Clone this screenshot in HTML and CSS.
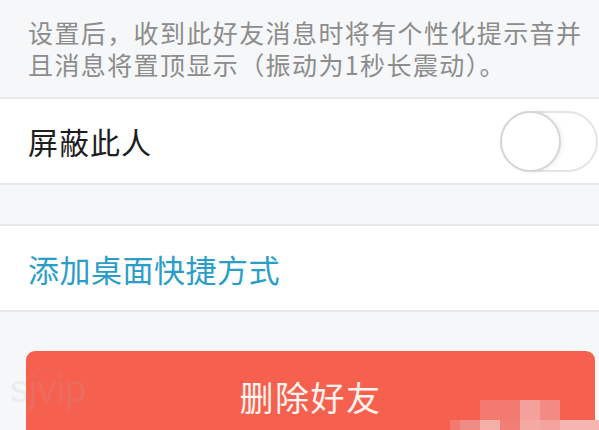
FILE: index.html
```html
<!DOCTYPE html>
<html lang="zh-CN">
<head>
    <meta charset="UTF-8">
    <title>好友设置</title>
    <link rel="stylesheet" href="styles.css">
</head>
<body>
    <div class="m_page">
        <div class="m_note">设置后，收到此好友消息时将有个性化提示音并且消息将置顶显示（振动为1秒长震动）。</div>

        <div class="m_row">
            <span class="m_label">屏蔽此人</span>
            <span class="m_switch"><span class="m_knob"></span></span>
        </div>

        <div class="m_gap"></div>

        <div class="m_row">
            <span class="m_link">添加桌面快捷方式</span>
        </div>

        <div class="m_btnwrap">
            <button class="m_delete">删除好友</button>
        </div>

        <div class="m_mark">sjvip</div>
        <div class="m_mosaic">
            <i class="b1"></i><i class="b2"></i><i class="b3"></i><i class="b4"></i>
            <i class="c1"></i><i class="c2"></i><i class="c3"></i><i class="c4"></i><i class="c5"></i><i class="c6"></i><i class="c7"></i>
        </div>
    </div>
</body>
</html>
```

FILE: styles.css
```css
* {margin: 0; padding: 0; box-sizing: border-box;}
html, body {width: 599px; height: 430px; overflow: hidden; background: #f5f7f8;}
body {font-family: "Noto Sans CJK SC", "Noto Sans", sans-serif;}

.m_page {position: relative; height: 430px; overflow: hidden;}

.m_note {height: 99px; padding: 16px 6px 0 28px; font-size: 25px; line-height: 32px; color: #8c8c8c; letter-spacing: 1.4px; border-bottom: 2px solid #e6e8e9;}

.m_row {display: flex; align-items: center; justify-content: space-between; height: 86px; padding-left: 28px; background: #fff; border-bottom: 2px solid #e6e8e9;}
.m_label {font-size: 30px; letter-spacing: 1px; color: #1e1e1e;}
.m_link {font-size: 31px; letter-spacing: 0.5px; color: #2b9ec8;}

.m_switch {position: relative; width: 98px; height: 61px; margin-right: 1px; border: 2px solid #e4e4e4; border-radius: 31px; background: #fff;}
.m_knob {position: absolute; left: -2px; top: -2px; width: 61px; height: 61px; border-radius: 50%; background: #fff; border: 2px solid #d6d6d6; box-shadow: 2px 0 4px rgba(0,0,0,0.06);}

.m_gap {height: 41px; border-bottom: 2px solid #e6e8e9;}

.m_btnwrap {padding: 39px 4px 0 26px;}
.m_delete {display: block; width: 100%; height: 90px; border: none; border-radius: 9px; background: #f6604f; color: #fff4ee; font-size: 34px; font-family: "Noto Sans CJK SC", sans-serif; letter-spacing: 1.5px;}

.m_mark {position: absolute; left: 10px; top: 368px; font-family: "Liberation Sans", sans-serif; font-size: 38px; color: rgba(175,178,180,0.16);}

.m_mosaic i {position: absolute; display: block;}
.m_mosaic .b1 {left: 480px; top: 400px; width: 20px; height: 20px; background: #f27a6e;}
.m_mosaic .b2 {left: 500px; top: 400px; width: 20px; height: 20px; background: #f27a6e;}
.m_mosaic .b3 {left: 520px; top: 400px; width: 20px; height: 20px; background: #f4a19b;}
.m_mosaic .b4 {left: 540px; top: 400px; width: 20px; height: 20px; background: #f28b84;}
.m_mosaic .c1 {left: 450px; top: 420px; width: 10px; height: 10px; background: #f47a70;}
.m_mosaic .c2 {left: 460px; top: 420px; width: 20px; height: 10px; background: #f08c86;}
.m_mosaic .c3 {left: 480px; top: 420px; width: 20px; height: 10px; background: #f4b0a8;}
.m_mosaic .c4 {left: 500px; top: 420px; width: 20px; height: 10px; background: #f17f76;}
.m_mosaic .c5 {left: 520px; top: 420px; width: 20px; height: 10px; background: #f4aaa2;}
.m_mosaic .c6 {left: 540px; top: 420px; width: 20px; height: 10px; background: #f3a49c;}
.m_mosaic .c7 {left: 560px; top: 420px; width: 39px; height: 10px; background: #f4b6ae;}
```
